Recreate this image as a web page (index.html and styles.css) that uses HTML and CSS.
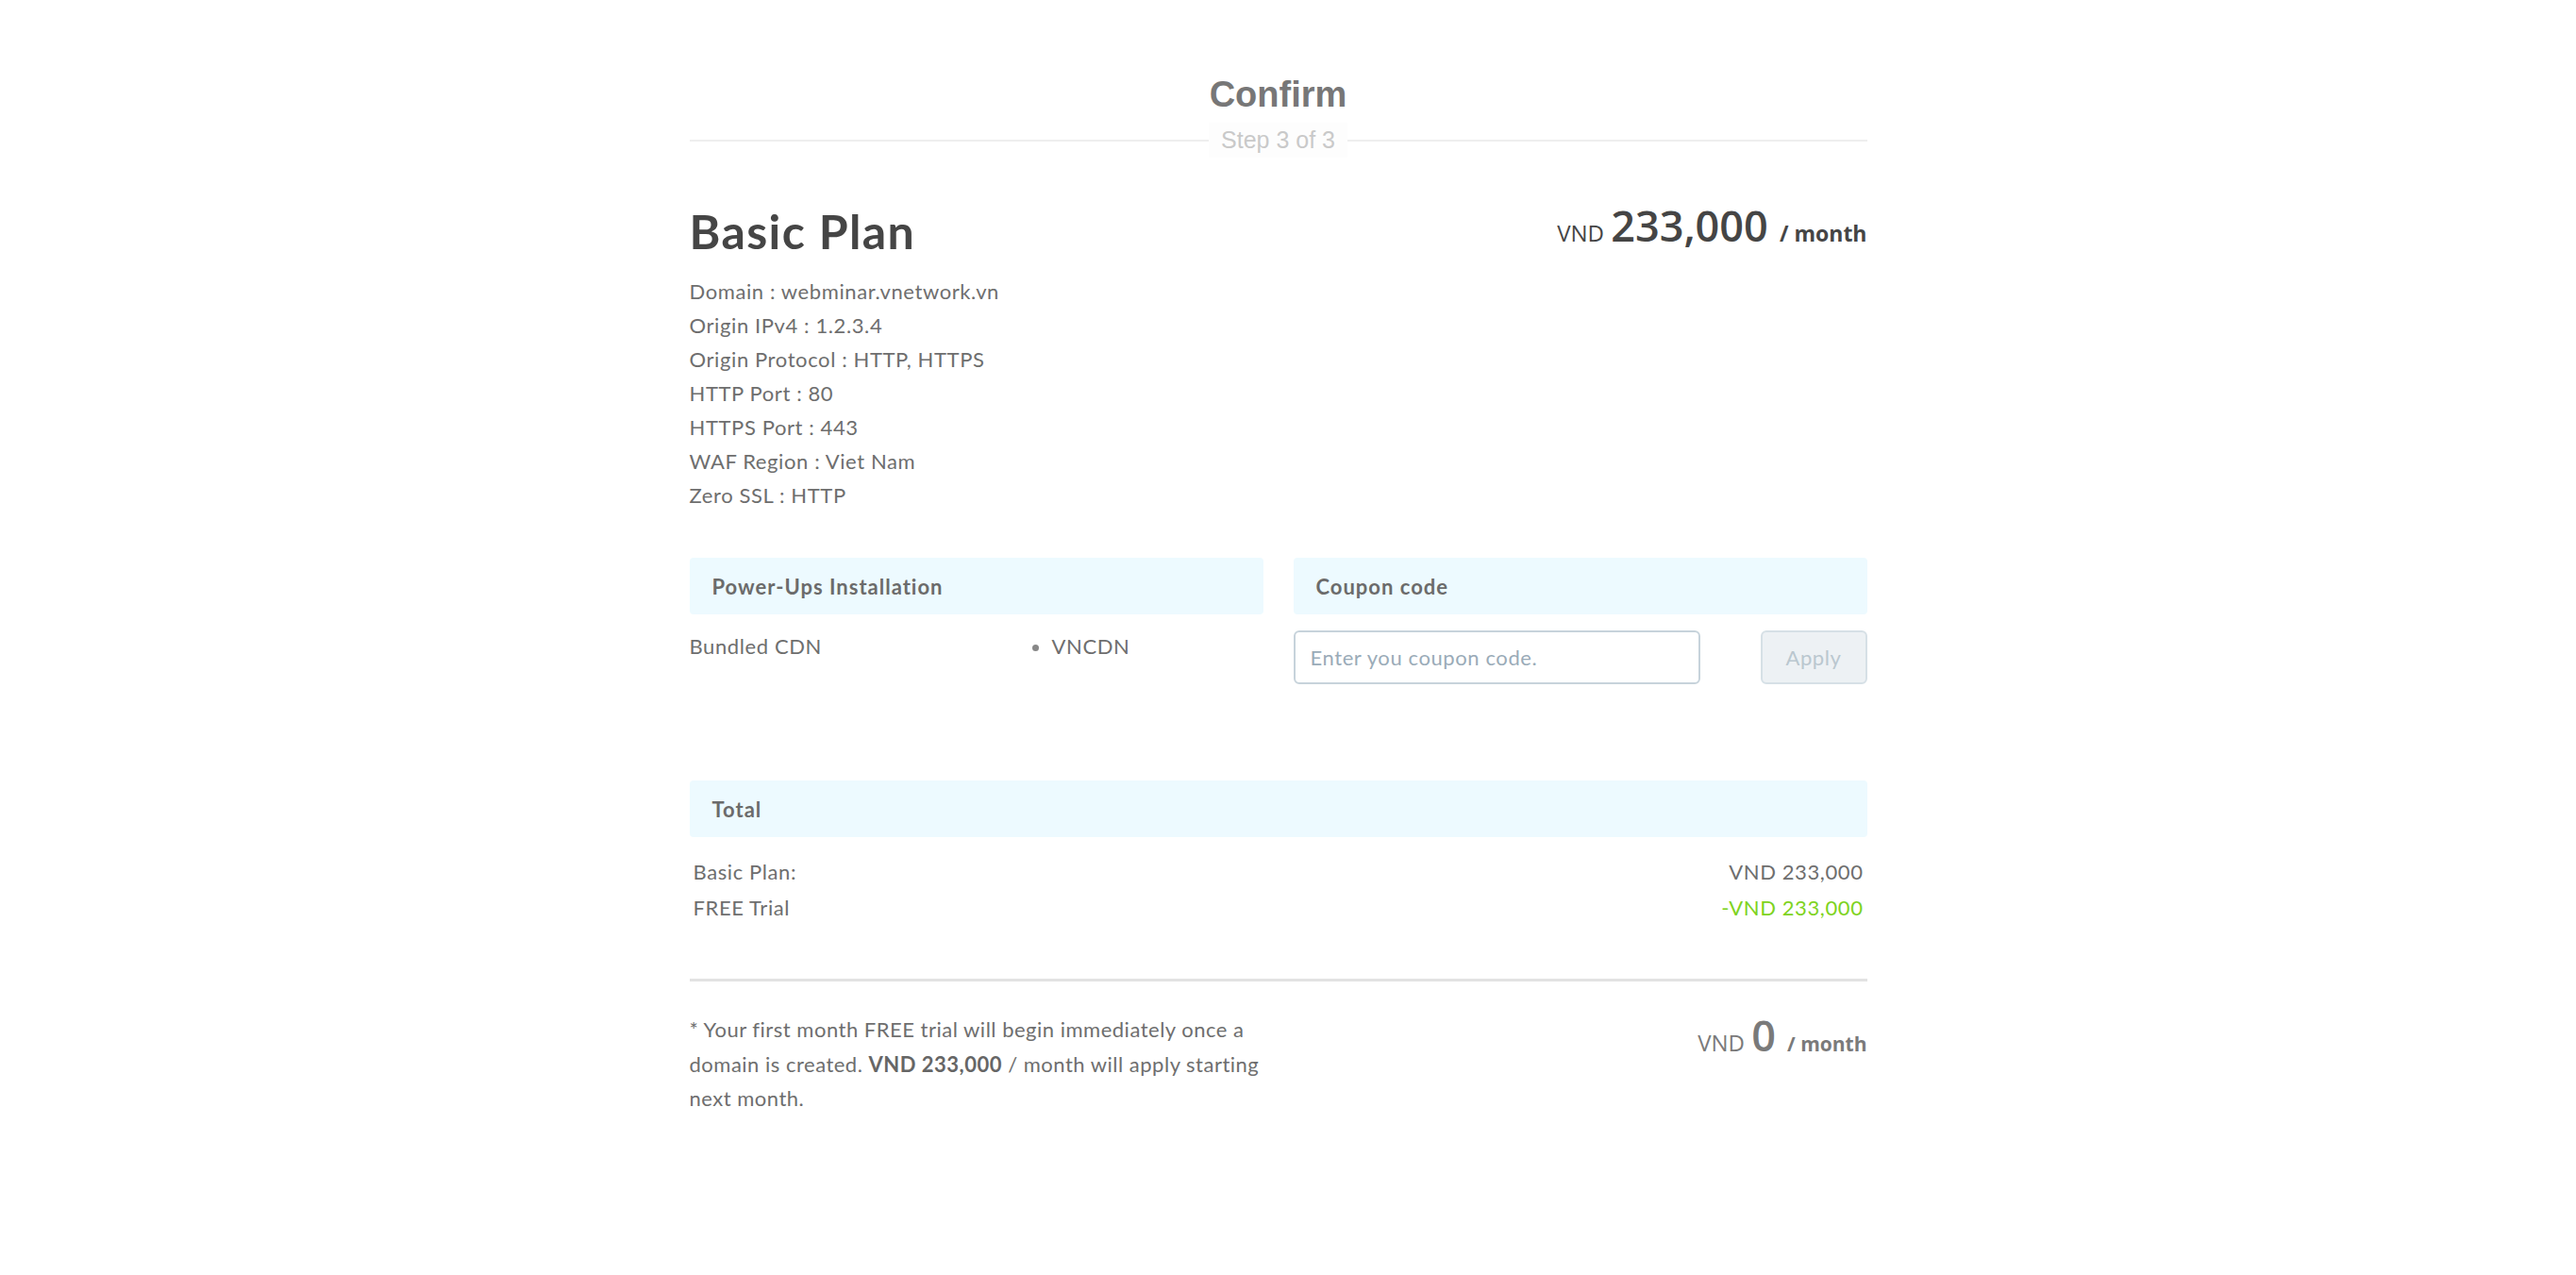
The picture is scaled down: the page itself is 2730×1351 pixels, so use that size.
FILE: index.html
```html
<!DOCTYPE html>
<html lang="en">
  <head>
    <meta charset="UTF-8" />
    <meta name="viewport" content="width=device-width, initial-scale=1.0" />
    <title>Confirm</title>
    <link rel="stylesheet" href="styles.css">
  </head>
  <body>
    <div class="wizard">
      <h1 class="step-title">Confirm</h1>
      <div class="step-divider">
        <span class="step-label">Step 3 of 3</span>
      </div>

      <!-- Plan summary -->
      <div class="plan-head">
        <h2 class="plan-name">Basic Plan</h2>
        <div class="price">
          <span class="price-currency">VND</span>
          <span class="price-amount">233,000</span>
          <span class="price-period">/ month</span>
        </div>
      </div>

      <ul class="plan-details">
        <li>Domain : webminar.vnetwork.vn</li>
        <li>Origin IPv4 : 1.2.3.4</li>
        <li>Origin Protocol : HTTP, HTTPS</li>
        <li>HTTP Port : 80</li>
        <li>HTTPS Port : 443</li>
        <li>WAF Region : Viet Nam</li>
        <li>Zero SSL : HTTP</li>
      </ul>

      <div class="options">
        <div class="option-col">
          <div class="section-head">Power-Ups Installation</div>
          <div class="powerup-row">
            <span class="powerup-name">Bundled CDN</span>
            <ul class="powerup-list">
              <li>VNCDN</li>
            </ul>
          </div>
        </div>
        <div class="option-col">
          <div class="section-head">Coupon code</div>
          <div class="coupon-row">
            <input class="coupon-input" type="text" placeholder="Enter you coupon code." />
            <button class="coupon-btn" disabled>Apply</button>
          </div>
        </div>
      </div>

      <div class="total">
        <div class="section-head">Total</div>
        <div class="total-rows">
          <div class="total-row">
            <span>Basic Plan:</span>
            <span>VND 233,000</span>
          </div>
          <div class="total-row">
            <span>FREE Trial</span>
            <span class="discount">-VND 233,000</span>
          </div>
        </div>
      </div>

      <div class="summary">
        <p class="summary-note">* Your first month FREE trial will begin immediately once a domain is created. <b>VND 233,000</b> / month will apply starting next month.</p>
        <div class="price price-final">
          <span class="price-currency">VND</span>
          <span class="price-amount">0</span>
          <span class="price-period">/ month</span>
        </div>
      </div>
    </div>
  </body>
</html>
```

FILE: styles.css
```css
* {
  margin: 0;
  padding: 0;
  box-sizing: border-box;
}

body {
  font-family: Lato, "Open Sans", sans-serif;
  letter-spacing: 0.6px;
  color: #707070;
  background-color: #fff;
  padding-right: 21px;
}

.wizard {
  width: 1248px;
  margin: 0 auto;
  padding-top: 78px;
  padding-bottom: 80px;
}

.step-title {
  font-family: "Liberation Sans", Arial, sans-serif;
  font-size: 38px;
  line-height: 44px;
  font-weight: bold;
  letter-spacing: 0;
  color: #777;
  text-align: center;
}

.step-divider {
  display: flex;
  align-items: center;
  margin-top: 8px;
}

.step-divider::before,
.step-divider::after {
  content: "";
  flex: 1;
  height: 2px;
  background-color: #eee;
}

.step-label {
  font-family: "Liberation Sans", Arial, sans-serif;
  font-size: 25px;
  line-height: 37px;
  letter-spacing: 0;
  color: #c9c9c9;
  background-color: #fdfdfd;
  padding: 0 13px;
}

.plan-head {
  display: flex;
  justify-content: space-between;
  align-items: flex-start;
  margin-top: 49px;
}

.plan-name {
  font-size: 50px;
  line-height: 58px;
  font-weight: bold;
  color: #454545;
  letter-spacing: 1.4px;
}

.price {
  font-family: "Open Sans", sans-serif;
  letter-spacing: 0;
  color: #454545;
  white-space: nowrap;
}

.price-currency {
  font-size: 24px;
  margin-right: 3px;
}

.price-amount {
  font-size: 45px;
  line-height: 45px;
  font-weight: 600;
}

.price-period {
  font-size: 23px;
  font-weight: bold;
  margin-left: 8px;
}

.plan-details {
  list-style: none;
  margin-top: 17px;
  font-size: 22px;
  line-height: 36px;
  color: #6e6e6e;
}

.options {
  display: grid;
  grid-template-columns: 1fr 1fr;
  gap: 32px;
  margin-top: 48px;
}

.section-head {
  display: flex;
  align-items: center;
  height: 60px;
  padding: 0 24px;
  background-color: #edfaff;
  border-radius: 4px;
  font-size: 22px;
  font-weight: bold;
  letter-spacing: 1px;
  color: #6b6b6b;
}

.powerup-row {
  display: flex;
  margin-top: 16px;
  font-size: 22px;
  line-height: 36px;
  color: #6e6e6e;
}

.powerup-name {
  width: 340px;
}

.powerup-list {
  padding-left: 44px;
}

.powerup-list li::marker {
  color: #888;
}

.coupon-row {
  display: flex;
  justify-content: space-between;
  margin-top: 17px;
}

.coupon-input {
  width: 431px;
  height: 57px;
  padding: 0 16px;
  border: 2px solid #c7d3db;
  border-radius: 6px;
  font-family: Lato, sans-serif;
  font-size: 22px;
  letter-spacing: 0.6px;
  color: #555;
  outline: none;
}

.coupon-input::placeholder {
  color: #9aabb8;
}

.coupon-btn {
  width: 113px;
  height: 57px;
  border: 2px solid #d6e0e6;
  border-radius: 6px;
  background-color: #edf1f4;
  font-family: Lato, sans-serif;
  font-size: 22px;
  letter-spacing: 0.6px;
  color: #bac7cf;
}

.total {
  margin-top: 102px;
}

.total-rows {
  margin-top: 18px;
  padding: 0 4px;
  font-size: 22px;
  line-height: 37.5px;
  color: #6e6e6e;
}

.total-row {
  display: flex;
  justify-content: space-between;
}

.discount {
  color: #7ed321;
}

.summary {
  display: flex;
  justify-content: space-between;
  align-items: flex-start;
  margin-top: 57px;
  padding-top: 33px;
  border-top: 3px solid #e2e2e2;
}

.summary-note {
  width: 620px;
  font-size: 22px;
  line-height: 36.5px;
  letter-spacing: 0.5px;
  color: #6e6e6e;
}

.summary-note b {
  color: #666;
}

.price-final {
  color: #7a7a7a;
  padding-top: 1px;
}

.price-final .price-period {
  font-size: 21px;
}
```
